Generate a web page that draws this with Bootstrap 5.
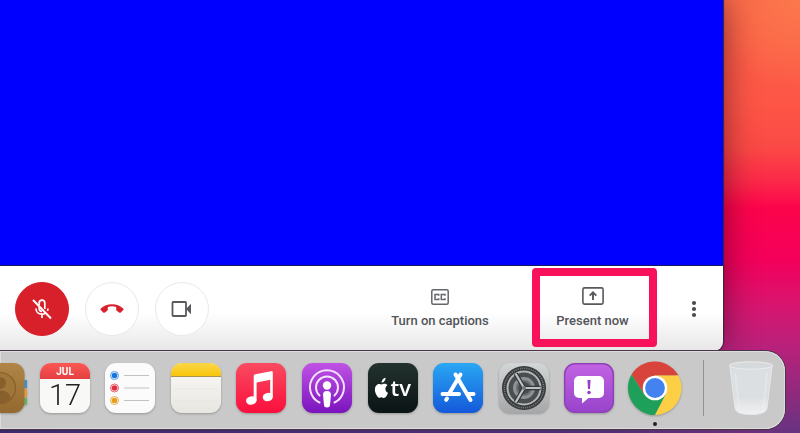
<!DOCTYPE html>
<html lang="en">
<head>
<meta charset="utf-8">
<meta name="viewport" content="width=device-width, initial-scale=1">
<title>Meet call</title>
<link href="https://cdn.jsdelivr.net/npm/bootstrap@5.3.0/dist/css/bootstrap.min.css" rel="stylesheet">
<style>
body{font-family:Roboto,"Open Sans",sans-serif;overflow:hidden;
background:linear-gradient(to right,#392b69,#4c3071 600px,#683176 740px,transparent) bottom/100% 5px no-repeat,
radial-gradient(circle at 100% 0,#fb784c,transparent 90px) no-repeat,
linear-gradient(#fb6648 0,#fd5546 24%,#fb4945 34%,#fb2848 42%,#fc044b 48%,#f3005b 60%,#d61670 71%,#b9217b 80%,#8f2a7d 91%,#673382)}
.meet-window{margin-right:77px;border-radius:0 0 9px 0;box-shadow:0 0 1px 1px #33263a,0 0 34px rgba(40,0,20,.55)}
.video-feed{background:#00f;border-bottom:1px solid #171760}
.call-bar{min-height:85px;padding:2px 14px 2px 15px;border-radius:0 0 9px 0;background:linear-gradient(#fff 55%,#e7e7e8)}
.round-btn{width:54px;height:54px;border:1px solid #e9e9ea;background:#fff;padding:0}
.mute-btn{background:#d8202a;border-color:#d8202a}
.call-actions{gap:22px}
.text-btn{background:none;border:0;color:#525458;font-size:13px;line-height:16px;font-weight:500;white-space:nowrap;gap:8px}
.captions-btn{width:120px;margin-right:10px}
.present-btn{width:125px;height:79px;border:8px solid #f8125c;border-radius:4px}
.more-btn{width:30px;height:40px;border:0;background:none}
.dock-bar{height:78px;padding-bottom:4px;margin:0 15px 4px 0;border-radius:0 20px 20px 0;background:#c9c9c9;box-shadow:0 0 0 1px #4b344b,inset 0 0 0 1px #dcdcdc}
.dock-apps{margin-left:-26px;min-width:0}
.app-btn{width:50px;height:50px;padding:0;border:0;background:none;flex:none;position:relative}
.app-btn svg,.bin-btn svg{display:block;overflow:visible}
.app-btn>svg{filter:drop-shadow(0 1px 1px rgba(0,0,0,.25))}
.running-dot{position:absolute;left:23px;bottom:-13px;width:4px;height:4px;border-radius:50%;background:#222}
.dock-rule{width:1px;height:56px;background:#929292;margin:0 25px 0 23px}
.bin-btn{padding:0;border:0;background:none;margin-right:12px}
</style>
<script src="https://cdn.jsdelivr.net/npm/bootstrap@5.3.0/dist/js/bootstrap.bundle.min.js"></script>
</head>
<body class="d-flex flex-column vh-100">
<main class="meet-window d-flex flex-column flex-grow-1">
  <div class="video-feed flex-grow-1"></div>
  <div class="call-bar d-flex align-items-center justify-content-between">
    <div class="d-flex gap-3">
      <button class="round-btn mute-btn rounded-circle d-flex align-items-center justify-content-center" aria-label="Unmute">
        <svg width="24" height="24" viewBox="0 0 24 24" fill="none" stroke="#fff" stroke-width="1.7"><path d="M9.200 8V6a2.800 2.800 0 0 1 5.600 0v6"/><path d="M6 11.500c0 3.500 2.500 5.700 6 5.700 1.400 0 2.600-.4 3.600-1.100M17.300 13.800c.5-.7.7-1.400.7-2.300M12 17v4M9.200 10v1.800c0 1.500 1.200 2.600 2.800 2.600"/><path d="M3 3l18 18.500" stroke-width="1.900"/></svg>
      </button>
      <button class="round-btn rounded-circle d-flex align-items-center justify-content-center" aria-label="Leave call">
        <svg width="24" height="24" viewBox="0 0 24 24" fill="#d8202a"><path d="M12 7.200c-4.300 0-8.400 1.500-11.200 4.200-.5.500-.5 1.200 0 1.700l2.400 2.300c.5.500 1.200.5 1.700.1l2.300-1.700c.4-.3.600-.7.600-1.100V9.900c2.700-.8 5.700-.8 8.400 0v2.800c0 .5.200.8.600 1.100l2.300 1.700c.5.400 1.200.4 1.700-.1l2.400-2.300c.5-.5.500-1.200 0-1.700C20.400 8.700 16.300 7.200 12 7.200z"/></svg>
      </button>
      <button class="round-btn rounded-circle d-flex align-items-center justify-content-center" aria-label="Turn off camera">
        <svg width="24" height="24" viewBox="0 0 24 24"><rect x="2.500" y="5" width="13.500" height="14" rx=".7" fill="none" stroke="#58595c" stroke-width="1.800"/><path d="M16.500 11.500l4.500-4.800v10.600L16.500 12.500z" fill="#58595c"/></svg>
      </button>
    </div>
    <div class="call-actions d-flex align-items-center align-self-stretch">
      <button class="text-btn captions-btn d-flex flex-column align-items-center justify-content-center p-0">
        <svg width="18" height="16" viewBox="0 0 18 16" fill="none" stroke="#646669" stroke-width="1.500"><rect x=".8" y=".8" width="16.400" height="14.400" rx="1.500"/><path d="M7.700 6.700V5.500H4v5h3.700V9.300M14 6.700V5.500h-3.700v5H14V9.300"/></svg>
        Turn on captions
      </button>
      <button class="text-btn present-btn align-self-start d-flex flex-column align-items-center justify-content-center p-0 pe-1">
        <svg width="22" height="18" viewBox="0 0 22 18" fill="none" stroke="#58595c" stroke-width="1.600"><rect x=".9" y=".9" width="20.200" height="16.200" rx="1.500"/><path d="M11 13V5.500M7.700 8.700L11 5.400l3.300 3.300" stroke-width="1.900"/></svg>
        Present now
      </button>
      <button class="more-btn d-flex align-items-center justify-content-center p-0" aria-label="More options">
        <svg width="6" height="18" viewBox="0 0 6 18" fill="#4c4d50"><circle cx="3" cy="3" r="2.100"/><circle cx="3" cy="9" r="2.100"/><circle cx="3" cy="15" r="2.100"/></svg>
      </button>
    </div>
  </div>
</main>
<nav class="dock-bar d-flex align-items-center" aria-label="Dock">
  <div class="dock-apps d-flex flex-grow-1 justify-content-between">
    <button class="app-btn" aria-label="Contacts">
      <svg width="50" height="50" viewBox="0 0 50 50"><defs><linearGradient id="gCo" x2="0" y2="1"><stop stop-color="#b08547"/><stop offset="1" stop-color="#94692f"/></linearGradient></defs><path d="M48 17h5v8h-5z" fill="#3d8fd0"/><path d="M48 26h5v8h-5z" fill="#e9953a"/><path d="M48 35h5v6l-5 2z" fill="#5db45a"/><rect width="50.500" height="50" rx="11" fill="url(#gCo)"/><circle cx="26" cy="25" r="15.500" fill="#a1763a" stroke="#87602c" stroke-width="1.200"/><circle cx="26" cy="20" r="6" fill="#87602c"/><path d="M15 35c2-6 6-7.500 11-7.500S35 29 37 35c-6 7-16 7-22 0z" fill="#87602c"/></svg>
    </button>
    <button class="app-btn" aria-label="Calendar">
      <svg width="50" height="50" viewBox="0 0 50 50"><defs><linearGradient id="gCa" x2="0" y2="1"><stop stop-color="#fb5854"/><stop offset="1" stop-color="#e44042"/></linearGradient></defs><rect width="50" height="50" rx="11" fill="#f8f8f7"/><path d="M0 16v-5A11 11 0 0 1 11 0h28a11 11 0 0 1 11 11v5z" fill="url(#gCa)"/><text x="25" y="12" text-anchor="middle" font-family="Roboto,sans-serif" font-weight="700" font-size="10" fill="#fff">JUL</text><text x="25" y="42" text-anchor="middle" font-family="Roboto,sans-serif" font-weight="300" font-size="29" fill="#222">17</text></svg>
    </button>
    <button class="app-btn" aria-label="Reminders">
      <svg width="50" height="50" viewBox="0 0 50 50"><rect width="50" height="50" rx="11" fill="#fbfbfb"/><g fill="none" stroke-width="1"><circle cx="9.500" cy="12.500" r="4" stroke="#4c9be6"/><circle cx="9.500" cy="25" r="4" stroke="#e8616a"/><circle cx="9.500" cy="37.500" r="4" stroke="#e9ae48"/></g><circle cx="9.500" cy="12.500" r="2.800" fill="#1475dc"/><circle cx="9.500" cy="25" r="2.800" fill="#e0303e"/><circle cx="9.500" cy="37.500" r="2.800" fill="#e99b1e"/><path d="M19 12.500h25M19 25h25M19 37.500h25" stroke="#c2c2c2"/></svg>
    </button>
    <button class="app-btn" aria-label="Notes">
      <svg width="50" height="50" viewBox="0 0 50 50"><defs><linearGradient id="gNo" x2="0" y2="1"><stop stop-color="#fbd748"/><stop offset="1" stop-color="#f8c50c"/></linearGradient><linearGradient id="gNp" x2="0" y2="1"><stop stop-color="#fafaf7"/><stop offset="1" stop-color="#e8e6e1"/></linearGradient></defs><rect width="50" height="50" rx="11" fill="url(#gNp)"/><path d="M0 13v-2A11 11 0 0 1 11 0h28a11 11 0 0 1 11 11v2z" fill="url(#gNo)"/><path d="M0 13.500h50" stroke="#a79455"/><path d="M3 26h44M3 38h44" stroke="#e6e5e0" stroke-width=".7"/></svg>
    </button>
    <button class="app-btn" aria-label="Music">
      <svg width="50" height="50" viewBox="0 0 50 50"><defs><linearGradient id="gMu" x2="0" y2="1"><stop stop-color="#f94b61"/><stop offset="1" stop-color="#fa0f3c"/></linearGradient></defs><rect width="50" height="50" rx="11" fill="url(#gMu)"/><g fill="#fff"><path d="M17.700 13.500c0-1.200.5-1.900 1.700-2.200L35 8.200c1.200-.2 1.800.3 1.800 1.400v24h-2.600V16.700L20.600 19.500v18h-2.900z"/><ellipse cx="15.300" cy="37.500" rx="5.300" ry="4.200" transform="rotate(-12 15.300 37.500)"/><ellipse cx="31.800" cy="34" rx="5.100" ry="4.200" transform="rotate(-12 31.800 34)"/></g></svg>
    </button>
    <button class="app-btn" aria-label="Podcasts">
      <svg width="50" height="50" viewBox="0 0 50 50"><defs><linearGradient id="gPo" x2="0" y2="1"><stop stop-color="#c052e5"/><stop offset="1" stop-color="#7a14bd"/></linearGradient></defs><rect width="50" height="50" rx="11" fill="url(#gPo)"/><g fill="none" stroke="#f4e3fc" stroke-width="2" stroke-linecap="round"><path d="M17.500 39.500a17 17 0 1 1 15 0"/><path d="M17.500 32.500a11 11 0 1 1 15 0"/></g><circle cx="25" cy="22.500" r="4.200" fill="#fff"/><path d="M21 31.500c0-2.500 1.600-3.500 4-3.500s4 1 4 3.500l-1 10.500c-.2 1.800-1.200 2.500-3 2.500s-2.800-.7-3-2.500z" fill="#fff"/></svg>
    </button>
    <button class="app-btn" aria-label="Apple TV">
      <svg width="50" height="50" viewBox="0 0 50 50"><defs><linearGradient id="gTv" x2="0" y2="1"><stop stop-color="#23322f"/><stop offset="1" stop-color="#0b1415"/></linearGradient></defs><rect width="50" height="50" rx="11" fill="url(#gTv)"/><path transform="translate(-1.500 -1.600) scale(1.120)" d="M18.700 21.200c-1.200-1.500-3.700-1.600-5.200-.5-1.500-1-3.900-.8-5.200 1.300-1.600 2.700-.6 6.500 1.300 9.200 1.200 1.600 2 1.600 3.900.9 1.900.8 3 .7 4.200-1 .7-1 1.200-1.900 1.500-3-3-1.500-3-5.500-.5-6.900zM13.500 19.200c-.2-2.300 1.500-4.100 3.500-4.500.2 2.200-1.500 4.300-3.500 4.500z" fill="#fff"/><text x="22.500" y="33" font-family="Open Sans,sans-serif" font-weight="600" font-size="22" fill="#fff">tv</text></svg>
    </button>
    <button class="app-btn" aria-label="App Store">
      <svg width="50" height="50" viewBox="0 0 50 50"><defs><linearGradient id="gAs" x2="0" y2="1"><stop stop-color="#2aa7f4"/><stop offset="1" stop-color="#1459d9"/></linearGradient></defs><rect width="50" height="50" rx="11" fill="url(#gAs)"/><g stroke="#fff" stroke-width="4" stroke-linecap="round"><path d="M27.500 11.500L16.500 30M22.500 11.500L37.500 37M9.500 31H26M34.500 31h6M14 35.500l-.8 1.300"/></g></svg>
    </button>
    <button class="app-btn" aria-label="System Preferences">
      <svg width="50" height="50" viewBox="0 0 50 50"><defs><linearGradient id="gSe" x2="0" y2="1"><stop stop-color="#d2d6d7"/><stop offset="1" stop-color="#a6a7a8"/></linearGradient></defs><rect width="50" height="50" rx="11" fill="url(#gSe)"/><circle cx="25" cy="25" r="22" fill="#36383a"/><circle cx="25" cy="25" r="19.700" fill="none" stroke="#777a7c" stroke-width="1.600" stroke-dasharray="1.200 1"/><circle cx="25" cy="25" r="16.500" fill="#4b4e50" stroke="#b4b7b8" stroke-width="2"/><circle cx="25" cy="25" r="9.500" fill="#6c6f71" stroke="#8f9294" stroke-width="3"/><circle cx="25" cy="25" r="6" fill="#4a4d4f"/><path d="M25 25h16.500M25 25l-8.300-14.300M25 25l-8.300 14.300" stroke="#35373a" stroke-width="4.500"/><path d="M25 25h16.500M25 25l-8.300-14.300M25 25l-8.300 14.300" stroke="#c0c3c4" stroke-width="2.200"/><circle cx="25" cy="25" r="2" fill="#77797b"/></svg>
    </button>
    <button class="app-btn" aria-label="Feedback Assistant">
      <svg width="50" height="50" viewBox="0 0 50 50"><defs><linearGradient id="gFe" x2="0" y2="1"><stop stop-color="#c263e3"/><stop offset="1" stop-color="#9744cb"/></linearGradient></defs><rect x=".7" y=".7" width="48.600" height="48.600" rx="10.500" fill="url(#gFe)" stroke="#8f40b9" stroke-width="1.400"/><path d="M15 13h20a5 5 0 0 1 5 5v12a5 5 0 0 1-5 5H24.500L18 40.500V35h-3a5 5 0 0 1-5-5V18a5 5 0 0 1 5-5z" fill="#fff"/><path d="M23.400 17h3.200l-.6 9h-2z" fill="#983fc9"/><circle cx="25" cy="29.500" r="1.800" fill="#983fc9"/></svg>
    </button>
    <button class="app-btn" aria-label="Chrome">
      <svg width="50" height="50" viewBox="0 0 50 50"><path d="M1.600 11.500A27 27 0 0 1 48.400 12.500H25L14.200 31.300z" fill="#d8443b"/><path d="M1.600 11.500A27 27 0 0 0 25 52l10.800-20.500H14.200z" fill="#1fa05a"/><path d="M48.400 12.500A27 27 0 0 1 25 52l10.800-20.800L25 12.500z" fill="#fdcf45"/><circle cx="25" cy="25" r="12.300" fill="#fff"/><circle cx="25" cy="25" r="9.900" fill="#4482ef"/></svg>
      <span class="running-dot"></span>
    </button>
  </div>
  <div class="dock-rule"></div>
  <button class="bin-btn" aria-label="Trash">
    <svg width="44" height="54" viewBox="0 0 44 54"><defs><linearGradient id="gBi" x2="0" y2="1"><stop stop-color="#dcdfe1"/><stop offset=".65" stop-color="#dcdfe2"/><stop offset="1" stop-color="#f0f1f2"/></linearGradient></defs><path d="M.8 4L6 47c.5 4 5 6.500 16 6.500S37.500 51 38 47L43.200 4z" fill="url(#gBi)" stroke="#e6e8e9"/><path d="M6 12l4 35M38 12l-3.500 35" stroke="#eff1f2" stroke-width="2" opacity=".4"/><ellipse cx="22" cy="4.500" rx="21.300" ry="3.700" fill="#d6d9db" stroke="#e9ebec"/></svg>
  </button>
</nav>
</body>
</html>
